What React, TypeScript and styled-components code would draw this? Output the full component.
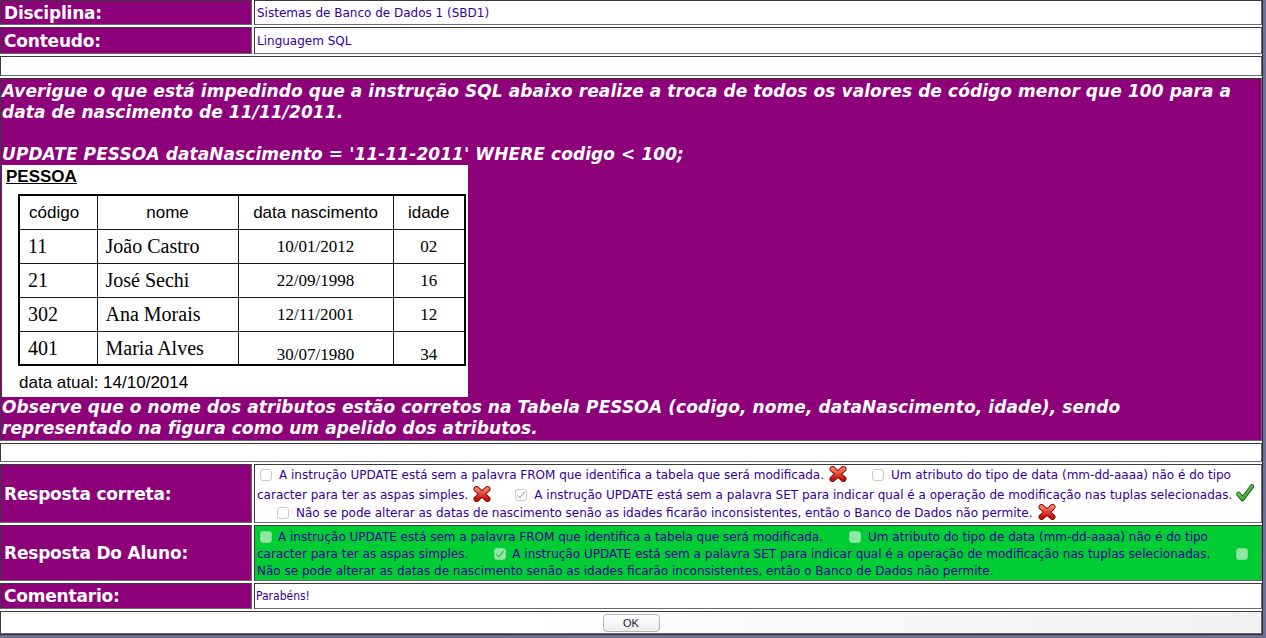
import React from 'react';
import styled, { createGlobalStyle } from 'styled-components';

const GlobalStyle = createGlobalStyle`
  html, body {
    margin: 0;
    padding: 0;
    background: #6d7096;
    overflow: hidden;
  }
`;

const PURPLE = '#8e007a';
const INK = '#330099';

const Sheet = styled.div`
  width: 1263px;
  height: 635px;
  box-sizing: border-box;
  background: #ffffff;
  border-right: 1px solid #2e2e2e;
  border-bottom: 1px solid #2e2e2e;
  display: grid;
  grid-template-columns: 252px 1fr;
  column-gap: 2px;
  row-gap: 2px;
  align-content: start;
  font-family: 'DejaVu Sans', Verdana, sans-serif;
`;

const Cell = styled.div<{ $h: number; $tone?: 'purple' | 'white' | 'green'; $span?: boolean }>`
  box-sizing: border-box;
  height: ${(p) => p.$h}px;
  border: 1px solid #6a6a6a;
  border-top-color: #3a3a3a;
  border-left-color: #3a3a3a;
  background: ${(p) => (p.$tone === 'purple' ? PURPLE : p.$tone === 'green' ? '#00cc33' : '#ffffff')};
  grid-column: ${(p) => (p.$span ? '1 / 3' : 'auto')};
  overflow: hidden;
`;

const Label = styled(Cell)`
  display: flex;
  align-items: center;
  padding-left: 3px;
  color: #ffffff;
  font-weight: bold;
  font-size: 17px;
  letter-spacing: -0.2px;
`;

const Value = styled(Cell)`
  display: flex;
  align-items: center;
  padding-left: 2px;
  color: ${INK};
  font-size: 12px;
`;

const Question = styled(Cell)`
  padding: 2px 1px 1px;
  color: #ffffff;
  font-weight: bold;
  font-style: italic;
  font-size: 17px;
  line-height: 21px;
  letter-spacing: 0.08px;
`;

const Answers = styled(Cell)<{ $lh: number; $pt: number }>`
  padding: ${(p) => p.$pt}px 2px 1px;
  color: ${INK};
  font-size: 12px;
  line-height: ${(p) => p.$lh}px;
  white-space: nowrap;
`;

const Comment = styled(Cell)`
  display: flex;
  align-items: center;
  padding-left: 1px;
  color: ${INK};
  font-family: 'Liberation Sans Narrow', 'DejaVu Sans Condensed', 'Liberation Sans', sans-serif;
  font-size: 12px;
`;

const Footer = styled(Cell)`
  display: flex;
  align-items: center;
  justify-content: center;
  background: linear-gradient(to right, #ffffff 40%, #f1f1f1);
`;

const OkButton = styled.button`
  width: 57px;
  height: 18px;
  padding: 0;
  border: 1px solid #b4b4b4;
  border-radius: 4px;
  background: linear-gradient(#ffffff, #ececec);
  font-family: 'Liberation Sans', Arial, sans-serif;
  font-size: 11px;
  color: #222;
`;

/* figura da tabela PESSOA */
const Figure = styled.div`
  width: 466px;
  height: 232px;
  background: #ffffff;
  color: #000;
  font-style: normal;
  font-weight: normal;
  letter-spacing: 0;
  line-height: normal;
  padding: 2px 0 0 4px;
  box-sizing: border-box;
  overflow: hidden;
  font-family: 'Liberation Sans', Arial, sans-serif;
`;

const FigTitle = styled.div`
  font-size: 17px;
  font-weight: bold;
  line-height: 20px;
  text-decoration: underline;
`;

const PTable = styled.table`
  margin: 7px 0 0 12px;
  width: 446px;
  table-layout: fixed;
  border-collapse: collapse;
  border: 2px solid #000;
  line-height: 1;
`;

const PHead = styled.th<{ $w: number; $left?: boolean }>`
  width: ${(p) => p.$w}px;
  height: 34px;
  box-sizing: border-box;
  padding: 0 0 0 ${(p) => (p.$left ? 9 : 0)}px;
  border: 1px solid #1a1a1a;
  font-weight: normal;
  font-size: 17px;
  text-align: ${(p) => (p.$left ? 'left' : 'center')};
`;

const PCell = styled.td<{ $big?: boolean; $left?: boolean; $low?: boolean }>`
  height: 34px;
  box-sizing: border-box;
  padding: 0 0 ${(p) => (p.$low ? 1 : 0)}px ${(p) => (p.$left ? 8 : 0)}px;
  vertical-align: ${(p) => (p.$low ? 'bottom' : 'middle')};
  border: 1px solid #1a1a1a;
  font-family: 'Liberation Serif', 'Times New Roman', serif;
  font-size: ${(p) => (p.$big ? 20 : 17)}px;
  text-align: ${(p) => (p.$left ? 'left' : 'center')};
`;

const Today = styled.div`
  margin: 7px 0 0 13px;
  font-size: 17px;
  line-height: 20px;
`;

const Cb = styled.span<{ $on?: boolean; $green?: boolean }>`
  display: inline-block;
  width: 12px;
  height: 12px;
  box-sizing: border-box;
  border-radius: 3px;
  border: 1px solid ${(p) => (p.$green ? '#7fdc95' : '#c9c9c9')};
  background: ${(p) => (p.$green ? '#8ee9a4' : '#ffffff')};
  vertical-align: -2px;
  position: relative;
  &::after {
    content: ${(p) => (p.$on ? "''" : 'none')};
    position: absolute;
    left: 3px;
    top: 0px;
    width: 3px;
    height: 7px;
    border: solid ${(p) => (p.$green ? '#4f9a63' : '#a8a8a8')};
    border-width: 0 1.5px 1.5px 0;
    transform: rotate(40deg);
  }
`;

const Gap = styled.span<{ $w: number }>`
  display: inline-block;
  width: ${(p) => p.$w}px;
`;

const Mark = styled.svg`
  vertical-align: -3px;
`;

const Wrong = () => (
  <Mark width="18" height="16" viewBox="0 0 18 16">
    <defs>
      <linearGradient id="xr" x1="0" y1="0" x2="0" y2="1">
        <stop offset="0" stopColor="#ff7a66" />
        <stop offset="1" stopColor="#c4120a" />
      </linearGradient>
    </defs>
    <path d="M3.5 3 L14.5 13 M14.5 3 L3.5 13" stroke="#7a0a04" strokeWidth="6" strokeLinecap="round" />
    <path d="M3.5 3 L14.5 13 M14.5 3 L3.5 13" stroke="url(#xr)" strokeWidth="4.2" strokeLinecap="round" />
  </Mark>
);

const Right = () => (
  <Mark width="18" height="18" viewBox="0 0 18 18">
    <defs>
      <linearGradient id="ok" x1="0" y1="0" x2="1" y2="1">
        <stop offset="0" stopColor="#8be07a" />
        <stop offset="1" stopColor="#1f8a1a" />
      </linearGradient>
    </defs>
    <path d="M2.5 10 L6.5 15 L16 2.5" fill="none" stroke="#1c5c16" strokeWidth="4.5" strokeLinecap="round" strokeLinejoin="round" />
    <path d="M2.5 10 L6.5 15 L16 2.5" fill="none" stroke="url(#ok)" strokeWidth="2.8" strokeLinecap="round" strokeLinejoin="round" />
  </Mark>
);

const pessoas = [
  { codigo: '11', nome: 'João Castro', data: '10/01/2012', idade: '02' },
  { codigo: '21', nome: 'José Sechi', data: '22/09/1998', idade: '16' },
  { codigo: '302', nome: 'Ana Morais', data: '12/11/2001', idade: '12' },
  { codigo: '401', nome: 'Maria Alves', data: '30/07/1980', idade: '34' },
];

const opt1 = 'A instrução UPDATE está sem a palavra FROM que identifica a tabela que será modificada.';
const opt2a = 'Um atributo do tipo de data (mm-dd-aaaa) não é do tipo';
const opt2b = 'caracter para ter as aspas simples.';
const opt3 = 'A instrução UPDATE está sem a palavra SET para indicar qual é a operação de modificação nas tuplas selecionadas.';
const opt4 = 'Não se pode alterar as datas de nascimento senão as idades ficarão inconsistentes, então o Banco de Dados não permite.';

const App = () => {
  return (
    <>
      <GlobalStyle />
      <Sheet>
        <Label $h={25} $tone="purple">Disciplina:</Label>
        <Value $h={25}>Sistemas de Banco de Dados 1 (SBD1)</Value>

        <Label $h={27} $tone="purple">Conteudo:</Label>
        <Value $h={27}>Linguagem SQL</Value>

        <Cell $h={20} $span />

        <Question $h={363} $tone="purple" $span>
          Averigue o que está impedindo que a instrução SQL abaixo realize a troca de todos os valores de código menor
          que 100 para a data de nascimento de 11/11/2011.
          <br />
          <br />
          UPDATE PESSOA dataNascimento = '11-11-2011' WHERE codigo &lt; 100;
          <Figure>
            <FigTitle>PESSOA</FigTitle>
            <PTable>
              <thead>
                <tr>
                  <PHead $w={78} $left>código</PHead>
                  <PHead $w={141}>nome</PHead>
                  <PHead $w={155}>data nascimento</PHead>
                  <PHead $w={72}>idade</PHead>
                </tr>
              </thead>
              <tbody>
                {pessoas.map((p, i) => (
                  <tr key={i}>
                    <PCell $big $left>{p.codigo}</PCell>
                    <PCell $big $left>{p.nome}</PCell>
                    <PCell $low={i === 3}>{p.data}</PCell>
                    <PCell $low={i === 3}>{p.idade}</PCell>
                  </tr>
                ))}
              </tbody>
            </PTable>
            <Today>data atual: 14/10/2014</Today>
          </Figure>
          Observe que o nome dos atributos estão corretos na Tabela PESSOA (codigo, nome, dataNascimento, idade), sendo
          <br />
          representado na figura como um apelido dos atributos.
        </Question>

        <Cell $h={19} $span />

        <Label $h={59} $tone="purple">Resposta correta:</Label>
        <Answers $h={59} $lh={18} $pt={1}>
          <Gap $w={3} />
          <Cb />
          <Gap $w={7} />
          {opt1}
          <Gap $w={5} />
          <Wrong />
          <Gap $w={25} />
          <Cb />
          <Gap $w={7} />
          {opt2a}
          <br />
          {opt2b}
          <Gap $w={5} />
          <Wrong />
          <Gap $w={24} />
          <Cb $on />
          <Gap $w={7} />
          {opt3}
          <Gap $w={4} />
          <Right />
          <br />
          <Gap $w={20} />
          <Cb />
          <Gap $w={7} />
          {opt4}
          <Gap $w={5} />
          <Wrong />
        </Answers>

        <Label $h={56} $tone="purple">Resposta Do Aluno:</Label>
        <Answers $h={56} $tone="green" $lh={17} $pt={3}>
          <Gap $w={3} />
          <Cb $green />
          <Gap $w={6} />
          {opt1}
          <Gap $w={26} />
          <Cb $green />
          <Gap $w={7} />
          {opt2a}
          <br />
          {opt2b}
          <Gap $w={26} />
          <Cb $green $on />
          <Gap $w={6} />
          {opt3}
          <Gap $w={26} />
          <Cb $green />
          <br />
          {opt4}
        </Answers>

        <Label $h={26} $tone="purple">Comentario:</Label>
        <Comment $h={26}>Parabéns!</Comment>

        <Footer $h={23} $span>
          <OkButton>OK</OkButton>
        </Footer>
      </Sheet>
    </>
  );
};

export default App;
